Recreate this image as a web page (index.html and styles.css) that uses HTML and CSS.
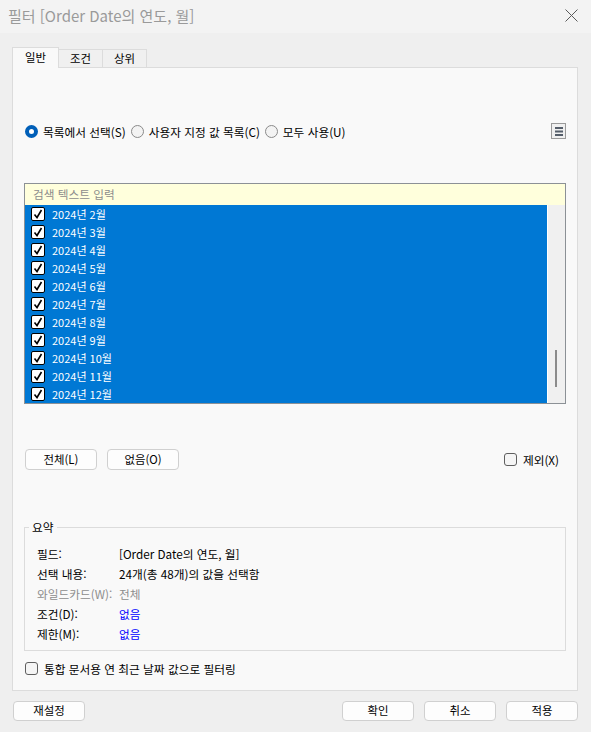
FILE: index.html
```html
<!DOCTYPE html>
<html lang="ko">
<head>
<meta charset="utf-8">
<title>필터</title>
<link rel="stylesheet" href="styles.css">
</head>
<body>
<div class="titlebar">
  <span class="title">필터 [Order Date의 연도, 월]</span>
  <svg class="close" width="13" height="13" viewBox="0 0 13 13"><path d="M0.5 0.5L12.5 12.5M12.5 0.5L0.5 12.5" stroke="#5a5a5a" stroke-width="1" fill="none"/></svg>
</div>
<div class="main">
  <div class="tabs">
    <div class="tab active">일반</div>
    <div class="tab">조건</div>
    <div class="tab">상위</div>
  </div>
  <div class="panel">
    <div class="radio-row">
      <span class="radio checked"></span><span class="rlabel">목록에서 선택(S)</span>
      <span class="radio"></span><span class="rlabel">사용자 지정 값 목록(C)</span>
      <span class="radio"></span><span class="rlabel">모두 사용(U)</span>
      <span class="menu-btn"><svg width="8" height="9" viewBox="0 0 8 9"><rect x="0" y="0" width="8" height="2" fill="#555e6a"/><rect x="0" y="3.5" width="8" height="2" fill="#555e6a"/><rect x="0" y="7" width="8" height="2" fill="#555e6a"/></svg></span>
    </div>
    <div class="listbox">
      <div class="search">검색 텍스트 입력</div>
      <div class="list-area">
        <div class="items">
          <div class="item"><span class="cb"><svg width="12" height="12" viewBox="0 0 12 12"><path d="M2.5 6.5L5 9.5L9.5 2" stroke="#000" stroke-width="1.6" fill="none"/></svg></span>2024년 2월</div>
          <div class="item"><span class="cb"><svg width="12" height="12" viewBox="0 0 12 12"><path d="M2.5 6.5L5 9.5L9.5 2" stroke="#000" stroke-width="1.6" fill="none"/></svg></span>2024년 3월</div>
          <div class="item"><span class="cb"><svg width="12" height="12" viewBox="0 0 12 12"><path d="M2.5 6.5L5 9.5L9.5 2" stroke="#000" stroke-width="1.6" fill="none"/></svg></span>2024년 4월</div>
          <div class="item"><span class="cb"><svg width="12" height="12" viewBox="0 0 12 12"><path d="M2.5 6.5L5 9.5L9.5 2" stroke="#000" stroke-width="1.6" fill="none"/></svg></span>2024년 5월</div>
          <div class="item"><span class="cb"><svg width="12" height="12" viewBox="0 0 12 12"><path d="M2.5 6.5L5 9.5L9.5 2" stroke="#000" stroke-width="1.6" fill="none"/></svg></span>2024년 6월</div>
          <div class="item"><span class="cb"><svg width="12" height="12" viewBox="0 0 12 12"><path d="M2.5 6.5L5 9.5L9.5 2" stroke="#000" stroke-width="1.6" fill="none"/></svg></span>2024년 7월</div>
          <div class="item"><span class="cb"><svg width="12" height="12" viewBox="0 0 12 12"><path d="M2.5 6.5L5 9.5L9.5 2" stroke="#000" stroke-width="1.6" fill="none"/></svg></span>2024년 8월</div>
          <div class="item"><span class="cb"><svg width="12" height="12" viewBox="0 0 12 12"><path d="M2.5 6.5L5 9.5L9.5 2" stroke="#000" stroke-width="1.6" fill="none"/></svg></span>2024년 9월</div>
          <div class="item"><span class="cb"><svg width="12" height="12" viewBox="0 0 12 12"><path d="M2.5 6.5L5 9.5L9.5 2" stroke="#000" stroke-width="1.6" fill="none"/></svg></span>2024년 10월</div>
          <div class="item"><span class="cb"><svg width="12" height="12" viewBox="0 0 12 12"><path d="M2.5 6.5L5 9.5L9.5 2" stroke="#000" stroke-width="1.6" fill="none"/></svg></span>2024년 11월</div>
          <div class="item"><span class="cb"><svg width="12" height="12" viewBox="0 0 12 12"><path d="M2.5 6.5L5 9.5L9.5 2" stroke="#000" stroke-width="1.6" fill="none"/></svg></span>2024년 12월</div>
        </div>
        <div class="scrollbar"><div class="thumb"></div></div>
      </div>
    </div>
    <div class="btn-row">
      <button class="btn">전체(L)</button>
      <button class="btn">없음(O)</button>
      <span class="check-wrap exclude"><span class="checkbox"></span><span>제외(X)</span></span>
    </div>
    <fieldset class="summary">
      <legend>요약</legend>
      <div class="sum-grid">
        <span>필드:</span><span>[Order Date의 연도, 월]</span>
        <span>선택 내용:</span><span>24개(총 48개)의 값을 선택함</span>
        <span class="muted">와일드카드(W):</span><span class="muted">전체</span>
        <span>조건(D):</span><span class="link">없음</span>
        <span>제한(M):</span><span class="link">없음</span>
      </div>
    </fieldset>
    <div class="check-wrap latest"><span class="checkbox"></span><span>통합 문서용 연 최근 날짜 값으로 필터링</span></div>
  </div>
  <div class="footer">
    <button class="btn fbtn">재설정</button>
    <span class="spacer"></span>
    <button class="btn fbtn">확인</button>
    <button class="btn fbtn">취소</button>
    <button class="btn fbtn">적용</button>
  </div>
</div>
</body>
</html>
```

FILE: styles.css
```css
html, body {
  margin: 0;
  padding: 0;
}
body {
  width: 591px;
  height: 732px;
  overflow: hidden;
  background: #efefef;
  font-family: "Noto Sans CJK KR", "Noto Sans", sans-serif;
  font-size: 11.7px;
  color: #000;
}
.titlebar {
  height: 33px;
  box-sizing: border-box;
  background: #f3f3f3;
  display: flex;
  align-items: center;
  justify-content: space-between;
  padding: 0 13px 0 8px;
}
.title {
  font-size: 15px;
  color: #9a9a9a;
  line-height: 1;
  margin-top: -2px;
}
.close {
  margin-top: -3px;
}
.main {
  padding: 14px 13px 0 12px;
}
.tabs {
  display: flex;
  align-items: flex-end;
  height: 20px;
}
.tab {
  box-sizing: border-box;
  height: 18px;
  width: 45px;
  margin-left: -1px;
  border: 1px solid #dcdcdc;
  border-bottom: none;
  background: #f0f0f0;
  display: flex;
  align-items: center;
  justify-content: center;
  line-height: 1;
  padding-top: 1px;
  font-size: 11.4px;
}
.tab.active {
  width: 47px;
  margin-left: 0;
  height: 21px;
  margin-bottom: -1px;
  background: #f9f9f9;
  position: relative;
  z-index: 1;
  padding-top: 0;
}
.panel {
  box-sizing: border-box;
  height: 624px;
  border: 1px solid #dcdcdc;
  background: #f9f9f9;
  padding: 0 11px;
  display: flex;
  flex-direction: column;
}
.radio-row {
  margin-top: 55px;
  height: 16px;
  display: flex;
  align-items: center;
}
.radio {
  box-sizing: border-box;
  width: 13px;
  height: 13px;
  border-radius: 50%;
  border: 1px solid #8a8a8a;
  background: #f3f3f3;
  margin-right: 5px;
  flex: none;
}
.radio:first-child {
  margin-left: 1px;
}
.radio.checked {
  border: 4px solid #005fb8;
  background: #fff;
}
.rlabel {
  margin-right: 5px;
  white-space: nowrap;
}
.menu-btn {
  margin-left: auto;
  box-sizing: border-box;
  width: 15px;
  height: 16px;
  border: 1px solid #9a9a9a;
  background: #f0f0f0;
  display: flex;
  align-items: center;
  justify-content: center;
}
.listbox {
  margin-top: 44px;
  box-sizing: border-box;
  height: 221px;
  border: 1px solid #8c9196;
  background: #fff;
  display: flex;
  flex-direction: column;
}
.search {
  height: 21px;
  background: #ffffdc;
  color: #8d8d8d;
  padding-left: 8px;
  line-height: 20px;
}
.list-area {
  height: 198px;
  display: flex;
}
.items {
  width: 522px;
  background: #0078d4;
}
.item {
  height: 18px;
  display: flex;
  align-items: center;
  padding-left: 6px;
  color: #fff;
  white-space: nowrap;
  font-size: 11px;
}
.cb {
  box-sizing: border-box;
  width: 14px;
  height: 14px;
  border: 1px solid #000;
  border-radius: 2px;
  background: #fff;
  margin-right: 7px;
  display: flex;
  align-items: center;
  justify-content: center;
}
.scrollbar {
  flex: 1;
  border-left: 1px solid #fff;
  background: #f0f0f0;
  display: flex;
  padding-top: 145px;
  box-sizing: border-box;
}
.thumb {
  width: 2px;
  height: 37px;
  margin-left: 7px;
  background: #8b8b8b;
}
.btn-row {
  margin-top: 45px;
  height: 21px;
  display: flex;
  align-items: center;
}
.btn {
  box-sizing: border-box;
  width: 72px;
  height: 21px;
  border: 1px solid #d0d0d0;
  border-radius: 4px;
  background: #fdfdfd;
  font-family: inherit;
  font-size: 11.4px;
  color: #000;
  padding: 0;
  line-height: 1;
}
.btn-row .btn {
  margin-left: 1px;
}
.btn-row .btn + .btn {
  margin-left: 10px;
}
.check-wrap {
  display: flex;
  align-items: center;
  white-space: nowrap;
}
.checkbox {
  box-sizing: border-box;
  width: 13px;
  height: 13px;
  border: 1px solid #5f5f5f;
  border-radius: 3px;
  background: #f5f5f5;
  margin-right: 6px;
}
.exclude {
  margin-left: auto;
  margin-right: 7px;
}
.summary {
  margin: 50px 0 0 0;
  border: 1px solid #dcdcdc;
  padding: 9px 12px 7px 12px;
  min-width: 0;
}
.summary legend {
  margin-left: -8px;
  padding: 0 3px;
  line-height: 14px;
}
.sum-grid {
  display: grid;
  grid-template-columns: 82px auto;
  grid-auto-rows: 20px;
  align-items: center;
}
.muted {
  color: #8d8d8d;
}
.link {
  color: #0000ff;
}
.latest {
  margin-top: 9px;
  height: 16px;
  margin-left: 1px;
}
.footer {
  margin-top: 10px;
  display: flex;
  align-items: center;
}
.fbtn {
  height: 20px;
  margin-left: 10px;
}
.footer .fbtn:first-child {
  margin-left: 1px;
}
.spacer {
  flex: 1;
}
```
